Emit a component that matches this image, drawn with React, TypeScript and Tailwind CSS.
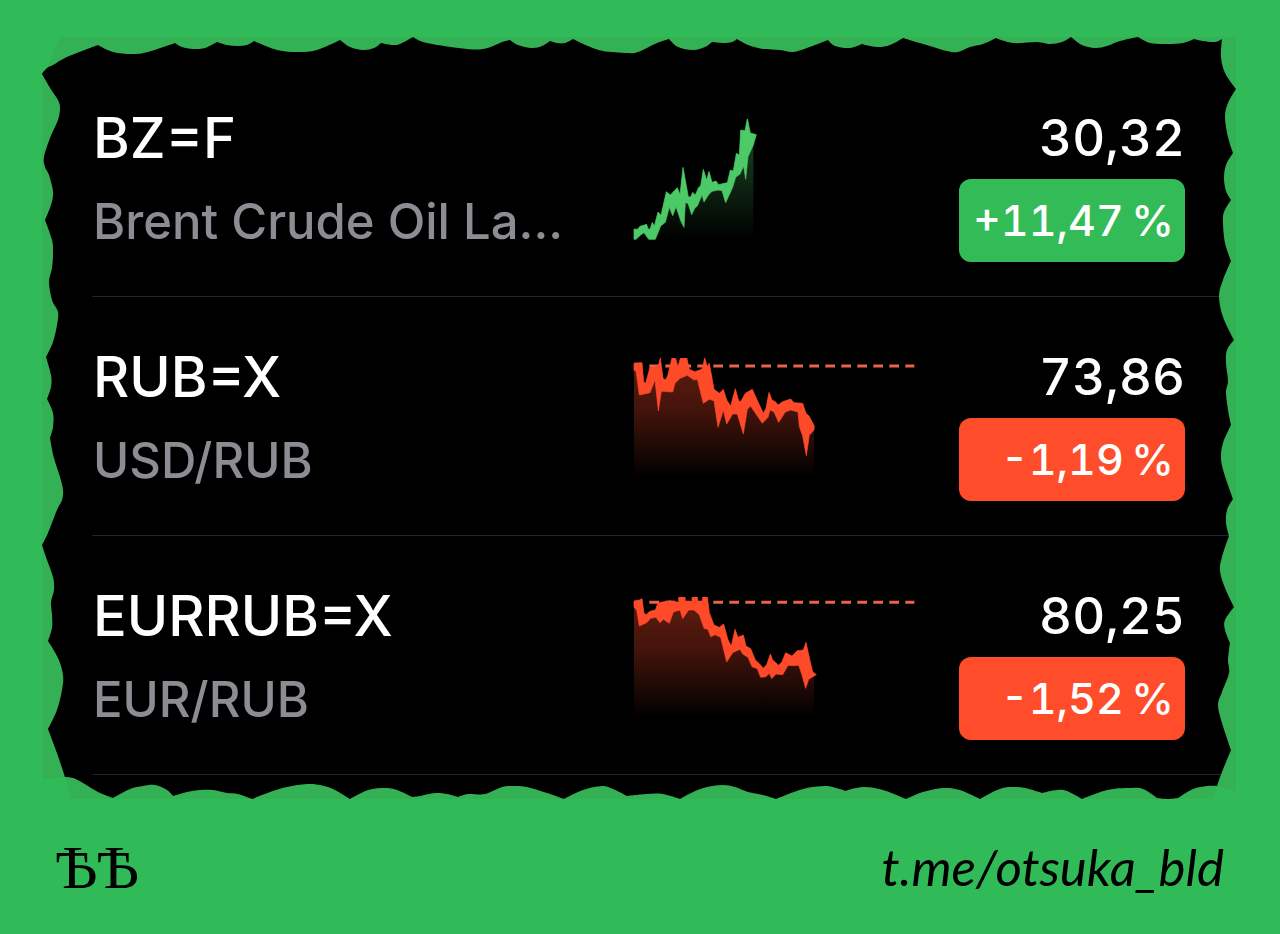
import React from 'react';

type Point = [number, number];

interface Quote {
  symbol: string;
  name: string;
  price: string;
  change: string;
  up: boolean;
  viewBox: string;
  // y of the previous close line, if the chart has one
  close?: number;
  endX: number;
  floor: number;
  upper: Point[];
  lower: Point[];
}

const quotes: Quote[] = [
  {
    symbol: 'BZ=F',
    name: 'Brent Crude Oil La...',
    price: '30,32',
    change: '+11,47\u2009%',
    up: true,
    viewBox: '39 57 846 363',
    endX: 400,
    floor: 418,
    upper: [[42, 387], [52, 388], [60, 379], [80, 373], [84, 386], [90, 388], [97, 367], [103, 378], [114, 336], [123, 346], [139, 275], [151, 285], [172, 263], [180, 283], [189, 202], [205, 290], [212, 291], [218, 277], [226, 285], [236, 262], [242, 258], [250, 208], [260, 240], [267, 214], [276, 247], [288, 243], [296, 254], [312, 250], [322, 248], [331, 210], [340, 213], [349, 160], [358, 165], [362, 90], [375, 92], [382, 55], [391, 99], [409, 104]],
    lower: [[42, 418], [48, 418], [62, 405], [72, 398], [86, 418], [106, 418], [122, 378], [136, 367], [148, 322], [158, 347], [168, 320], [182, 362], [192, 382], [196, 308], [204, 310], [215, 344], [224, 325], [232, 318], [246, 285], [252, 306], [266, 284], [276, 274], [295, 270], [306, 272], [317, 308], [338, 262], [347, 232], [360, 222], [371, 198], [377, 238], [384, 170], [400, 135]],
  },
  {
    symbol: 'RUB=X',
    name: 'USD/RUB',
    price: '73,86',
    change: '-1,19\u2009%',
    up: false,
    viewBox: '99 84 846 363',
    close: 108,
    endX: 642,
    floor: 444,
    upper: [[102, 99], [126, 98], [131, 155], [137, 160], [150, 112], [174, 110], [181, 84], [189, 145], [196, 150], [203, 138], [216, 83], [226, 83], [234, 110], [242, 82], [260, 82], [268, 118], [284, 125], [300, 120], [308, 115], [314, 82], [321, 110], [328, 100], [342, 178], [358, 190], [370, 178], [380, 210], [392, 228], [406, 176], [416, 212], [422, 215], [436, 190], [457, 178], [465, 196], [476, 220], [490, 250], [498, 235], [507, 187], [516, 210], [526, 215], [534, 225], [548, 215], [572, 207], [582, 218], [608, 220], [618, 250], [627, 258], [643, 288]],
    lower: [[102, 122], [108, 122], [118, 195], [150, 188], [165, 150], [175, 243], [184, 184], [218, 186], [225, 160], [240, 145], [262, 136], [282, 150], [292, 148], [310, 220], [328, 208], [342, 212], [354, 292], [370, 240], [380, 282], [398, 252], [412, 252], [418, 272], [430, 312], [442, 238], [452, 228], [470, 255], [487, 280], [504, 262], [510, 240], [522, 246], [536, 277], [556, 246], [572, 240], [594, 246], [598, 290], [608, 318], [619, 377], [628, 316], [642, 300]],
  },
  {
    symbol: 'EURRUB=X',
    name: 'EUR/RUB',
    price: '80,25',
    change: '-1,52\u2009%',
    up: false,
    viewBox: '99 81 846 363',
    close: 97,
    endX: 642,
    floor: 444,
    upper: [[102, 93], [118, 90], [126, 86], [132, 130], [138, 134], [150, 124], [166, 120], [174, 98], [210, 92], [236, 97], [236, 80], [255, 80], [256, 95], [276, 95], [276, 80], [292, 80], [294, 95], [307, 95], [308, 80], [322, 80], [328, 128], [342, 165], [358, 172], [371, 162], [384, 210], [394, 228], [405, 178], [414, 202], [430, 195], [438, 228], [452, 236], [466, 270], [482, 285], [490, 295], [500, 284], [511, 252], [518, 270], [536, 286], [546, 275], [557, 248], [576, 258], [592, 242], [610, 240], [618, 217], [630, 272], [638, 305], [649, 314]],
    lower: [[102, 112], [110, 120], [118, 168], [140, 158], [152, 145], [168, 142], [180, 158], [190, 148], [208, 160], [220, 126], [240, 120], [248, 146], [266, 120], [282, 120], [298, 134], [312, 175], [324, 178], [332, 200], [346, 194], [362, 202], [380, 276], [398, 248], [420, 238], [428, 252], [444, 262], [456, 290], [472, 296], [482, 322], [498, 320], [508, 310], [515, 326], [528, 312], [548, 314], [564, 286], [576, 287], [596, 286], [605, 312], [617, 355], [626, 328], [642, 318]],
  },
];

// outline of the torn paper, clockwise from the top left corner
const tornEdge: Point[] = [
  [42, 74], [45, 68], [53, 65], [67, 57], [98, 45], [113, 52], [132, 54], [148, 52], [175, 43], [182, 47], [193, 49], [205, 48], [217, 42], [227, 45], [237, 46], [247, 45], [254, 41], [277, 50], [298, 52], [317, 50], [340, 40], [350, 47], [363, 50], [374, 48], [381, 43], [392, 45], [400, 44], [413, 37], [427, 43], [467, 49], [483, 49], [493, 46], [502, 42], [510, 40], [518, 45], [532, 48], [542, 46], [550, 41], [557, 43], [565, 43], [573, 39], [588, 46], [603, 51], [627, 53], [638, 52], [657, 43], [669, 39], [678, 47], [693, 50], [705, 47], [712, 42], [723, 43], [732, 42], [737, 39], [748, 45], [763, 49], [780, 50], [793, 52], [807, 48], [828, 40], [835, 46], [850, 48], [862, 44], [877, 47], [890, 45], [903, 38], [923, 44], [947, 51], [958, 52], [970, 47], [983, 44], [996, 38], [1013, 43], [1037, 42], [1050, 44], [1062, 42], [1071, 37], [1082, 45], [1095, 48], [1107, 46], [1120, 41], [1138, 37], [1150, 43], [1167, 44], [1183, 43], [1194, 39], [1203, 41], [1215, 42], [1222, 39],
  [1221, 57], [1225, 73], [1236, 89], [1228, 103], [1225, 117], [1228, 137], [1233, 153], [1226, 165], [1224, 178], [1226, 191], [1231, 200], [1224, 212], [1223, 223], [1225, 243], [1231, 261], [1223, 280], [1219, 296], [1223, 317], [1234, 340], [1227, 350], [1226, 363], [1228, 381], [1226, 392], [1228, 410], [1231, 425], [1223, 443], [1221, 458], [1224, 473], [1233, 499], [1227, 510], [1226, 523], [1229, 536], [1222, 557], [1220, 571], [1225, 588], [1234, 607], [1225, 620], [1225, 630], [1230, 643], [1228, 660], [1229, 673], [1222, 692], [1218, 705], [1222, 723], [1231, 750], [1222, 772], [1217, 786],
  [1207, 786], [1193, 789], [1178, 798], [1168, 799], [1157, 798], [1143, 789], [1130, 788], [1107, 790], [1082, 799], [1067, 791], [1057, 790], [1042, 793], [1025, 788], [1010, 787], [997, 790], [980, 799], [960, 790], [943, 788], [923, 792], [906, 799], [883, 790], [863, 787], [845, 791], [840, 789], [825, 786], [803, 789], [776, 799], [763, 795], [748, 792], [735, 787], [723, 785], [707, 787], [693, 792], [680, 799], [663, 794], [647, 794], [627, 796], [613, 789], [602, 786], [583, 790], [564, 799], [547, 793], [527, 787], [513, 786], [502, 787], [485, 794], [468, 794], [458, 797], [447, 794], [435, 793], [420, 796], [412, 797], [397, 790], [385, 788], [368, 790], [350, 799], [333, 789], [320, 785], [307, 784], [287, 787], [270, 792], [252, 799], [238, 794], [227, 793], [213, 790], [200, 790], [187, 792], [173, 796], [167, 790], [155, 785], [143, 786], [130, 789], [113, 798], [98, 792], [83, 783], [73, 778], [65, 777],
  [57, 753], [48, 729], [57, 710], [62, 690], [63, 675], [58, 658], [48, 641], [52, 628], [52, 615], [51, 602], [54, 590], [53, 577], [47, 560], [42, 545], [48, 533], [57, 510], [62, 500], [63, 490], [60, 477], [54, 458], [50, 438], [53, 427], [53, 413], [47, 399], [51, 387], [51, 375], [46, 357], [53, 342], [57, 325], [58, 312], [52, 300], [49, 282], [52, 268], [53, 253], [52, 240], [45, 220], [51, 205], [53, 192], [49, 175], [45, 167], [44, 157], [50, 138], [58, 120], [60, 108], [58, 100], [52, 91],
];

// smooth curve through the points, kept sharp where the edge turns hard
const tornPath = (pts: Point[]) => {
  const n = pts.length;
  const tangents = pts.map((p, i): Point => {
    const a = pts[(i - 1 + n) % n];
    const b = pts[(i + 1) % n];
    const turn = Math.atan2(b[1] - p[1], b[0] - p[0]) - Math.atan2(p[1] - a[1], p[0] - a[0]);
    const outward = Math.sin(turn) > 0.42;
    return outward ? [0, 0] : [(b[0] - a[0]) / 6, (b[1] - a[1]) / 6];
  });
  let d = `M${pts[0][0]} ${pts[0][1]}`;
  for (let i = 0; i < n; i++) {
    const j = (i + 1) % n;
    const [x1, y1] = pts[i];
    const [x2, y2] = pts[j];
    d += `C${x1 + tangents[i][0]} ${y1 + tangents[i][1]} ${x2 - tangents[j][0]} ${y2 - tangents[j][1]} ${x2} ${y2}`;
  }
  return d + 'Z';
};

const join = (pts: Point[]) => pts.map(p => p.join(',')).join(' ');

const PaperEdge: React.FC = () => (
  <svg
    className="pointer-events-none absolute inset-0 h-full w-full"
    viewBox="42 37 1194 762"
    preserveAspectRatio="none"
    aria-hidden="true"
  >
    <path d={`M41 36H1237V800H41Z${tornPath(tornEdge)}`} fill="#34b154" fillRule="evenodd" />
    <path d="M41 36H60L48 67L41 74ZM41 779L65 777L71 800H41ZM1217 786L1237 792V800H1212Z" fill="#31bb58" />
  </svg>
);

const Sparkline: React.FC<{ quote: Quote }> = ({ quote }) => {
  const { symbol, up, viewBox, close, endX, floor, upper, lower } = quote;
  const gradientId = `fill-${symbol.replace('=', '-')}`;
  const color = up ? '#4cca67' : '#ff4a29';
  const startX = lower[0][0];

  return (
    <svg className="h-[121px] w-[282px] shrink-0" viewBox={viewBox} role="img" aria-label={`${symbol} chart`}>
      <defs>
        <linearGradient id={gradientId} x1="0" y1="0" x2="0" y2="1">
          <stop offset="0" stopColor={color} stopOpacity="0.38" />
          <stop offset={up ? '0.5' : '0.45'} stopColor={color} stopOpacity={up ? '0.2' : '0.26'} />
          <stop offset="1" stopColor={color} stopOpacity="0" />
        </linearGradient>
      </defs>
      {close && (
        <line x1="148" y1={close} x2="943" y2={close} stroke="#ec634b" strokeWidth="9" strokeDasharray="29 19" />
      )}
      <polygon
        points={`${join(upper.filter(p => p[0] <= endX))} ${endX},${upper[upper.length - 1][1]} ${endX},${floor} ${startX},${floor}`}
        fill={`url(#${gradientId})`}
      />
      <polygon points={`${join(upper)} ${join([...lower].reverse())}`} fill={color} stroke={color} strokeWidth="2" />
    </svg>
  );
};

const QuoteRow: React.FC<{ quote: Quote }> = ({ quote }) => (
  <li className="flex items-start border-b border-[#242426] pt-12 pr-[51px] pb-[34px]">
    <div className="flex min-w-0 flex-1 flex-col gap-5 pl-px">
      <h2 className="text-[56px] leading-[64px] font-medium text-white">{quote.symbol}</h2>
      <p className="truncate text-[49px] leading-[64px] font-medium text-[#8d8c92]">{quote.name}</p>
    </div>
    <div className="mt-[13px] mr-11 flex">
      <Sparkline quote={quote} />
    </div>
    <div className="flex w-[226px] shrink-0 flex-col gap-[9px] text-right tabular-nums">
      <p className="text-[51px] leading-[64px] font-medium text-white">{quote.price}</p>
      <p className={`rounded-xl pr-[11px] text-[43px] leading-[83px] font-medium whitespace-nowrap text-white ${quote.up ? 'bg-[#33bb58]' : 'bg-[#ff4c2a]'}`}>
        {quote.change}
      </p>
    </div>
  </li>
);

const App: React.FC = () => {
  return (
    <div className="min-h-screen bg-[#31bb58] px-[42px] pt-[37px] font-['Inter',sans-serif]">
      <main className="relative mr-[2px] bg-black pt-[21px] pb-6">
        <ul className="ml-[50px]">
          {quotes.map(quote => (
            <QuoteRow key={quote.symbol} quote={quote} />
          ))}
        </ul>
        <PaperEdge />
      </main>
      <footer className="flex items-center justify-between px-[14px] pt-9 text-black">
        <span className="font-['Liberation_Serif',serif] text-[62px] leading-[64px]">ѢѢ</span>
        <a href="https://t.me/otsuka_bld" className="font-['Lato',cursive] text-[51px] leading-[64px] italic">
          t.me/otsuka_bld
        </a>
      </footer>
    </div>
  );
};

export default App;
